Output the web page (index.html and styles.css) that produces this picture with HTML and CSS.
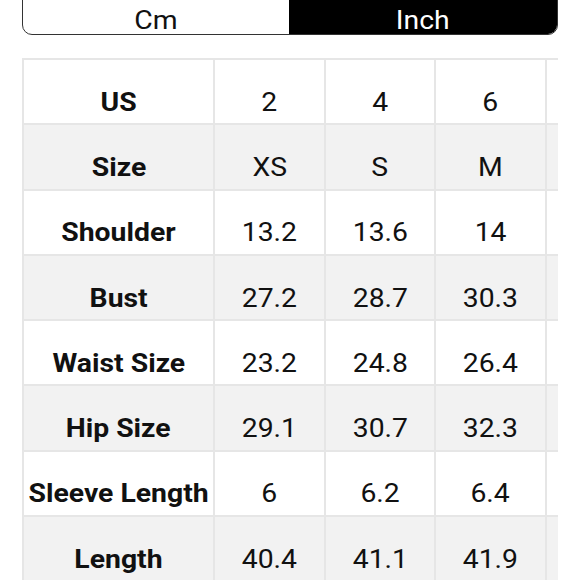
FILE: index.html
```html
<!DOCTYPE html>
<html>
<head>
<meta charset="utf-8">
<link rel="stylesheet" href="styles.css">
</head>
<body>
<div class="toggle">
  <div class="opt"><span class="t">Cm</span></div>
  <div class="opt active"><span class="t">Inch</span></div>
</div>
<div class="wrap">
  <div class="grid">
    <div class="c h"><span class="t">US</span></div><div class="c"><span class="t">2</span></div><div class="c"><span class="t">4</span></div><div class="c"><span class="t">6</span></div><div class="c"></div>
    <div class="c h g"><span class="t">Size</span></div><div class="c g"><span class="t">XS</span></div><div class="c g"><span class="t">S</span></div><div class="c g"><span class="t">M</span></div><div class="c g"></div>
    <div class="c h"><span class="t">Shoulder</span></div><div class="c"><span class="t">13.2</span></div><div class="c"><span class="t">13.6</span></div><div class="c"><span class="t">14</span></div><div class="c"></div>
    <div class="c h g"><span class="t">Bust</span></div><div class="c g"><span class="t">27.2</span></div><div class="c g"><span class="t">28.7</span></div><div class="c g"><span class="t">30.3</span></div><div class="c g"></div>
    <div class="c h"><span class="t">Waist Size</span></div><div class="c"><span class="t">23.2</span></div><div class="c"><span class="t">24.8</span></div><div class="c"><span class="t">26.4</span></div><div class="c"></div>
    <div class="c h g"><span class="t">Hip Size</span></div><div class="c g"><span class="t">29.1</span></div><div class="c g"><span class="t">30.7</span></div><div class="c g"><span class="t">32.3</span></div><div class="c g"></div>
    <div class="c h"><span class="t">Sleeve Length</span></div><div class="c"><span class="t">6</span></div><div class="c"><span class="t">6.2</span></div><div class="c"><span class="t">6.4</span></div><div class="c"></div>
    <div class="c h g"><span class="t">Length</span></div><div class="c g"><span class="t">40.4</span></div><div class="c g"><span class="t">41.1</span></div><div class="c g"><span class="t">41.9</span></div><div class="c g"></div>
  </div>
</div>
</body>
</html>
```
FILE: styles.css
```css
html, body {
  margin: 0;
  padding: 0;
  background: #fff;
  overflow: hidden;
}
body {
  font-family: Roboto, "Liberation Sans", sans-serif;
  color: #111;
  width: 580px;
  height: 580px;
}
.t {
  display: inline-block;
  transform: scaleX(1.09);
}
.toggle {
  margin: -12px 0 0 22px;
  width: 536px;
  height: 47px;
  box-sizing: border-box;
  border: 1.5px solid #333;
  border-radius: 10px;
  display: flex;
  overflow: hidden;
}
.opt {
  flex: 0 0 266px;
  display: flex;
  align-items: center;
  justify-content: center;
  padding-top: 16px;
  box-sizing: border-box;
  font-size: 26px;
  color: #111;
}
.opt.active {
  flex: 1 1 auto;
  background: #000;
  color: #fff;
}
.wrap {
  margin: 23px 0 0 22px;
  width: 536px;
  overflow: hidden;
}
.grid {
  display: grid;
  grid-template-columns: 189px 109px 108px 109px 109px;
  grid-auto-rows: 63.3px;
  gap: 2px;
  padding: 2px;
  width: max-content;
  background: #e6e6e6;
}
.c {
  background: #fff;
  display: flex;
  align-items: center;
  justify-content: center;
  padding-top: 20px;
  box-sizing: border-box;
  font-size: 26px;
  white-space: nowrap;
}
.c.g {
  background: #f2f2f2;
}
.c.h {
  font-weight: 700;
}
```
